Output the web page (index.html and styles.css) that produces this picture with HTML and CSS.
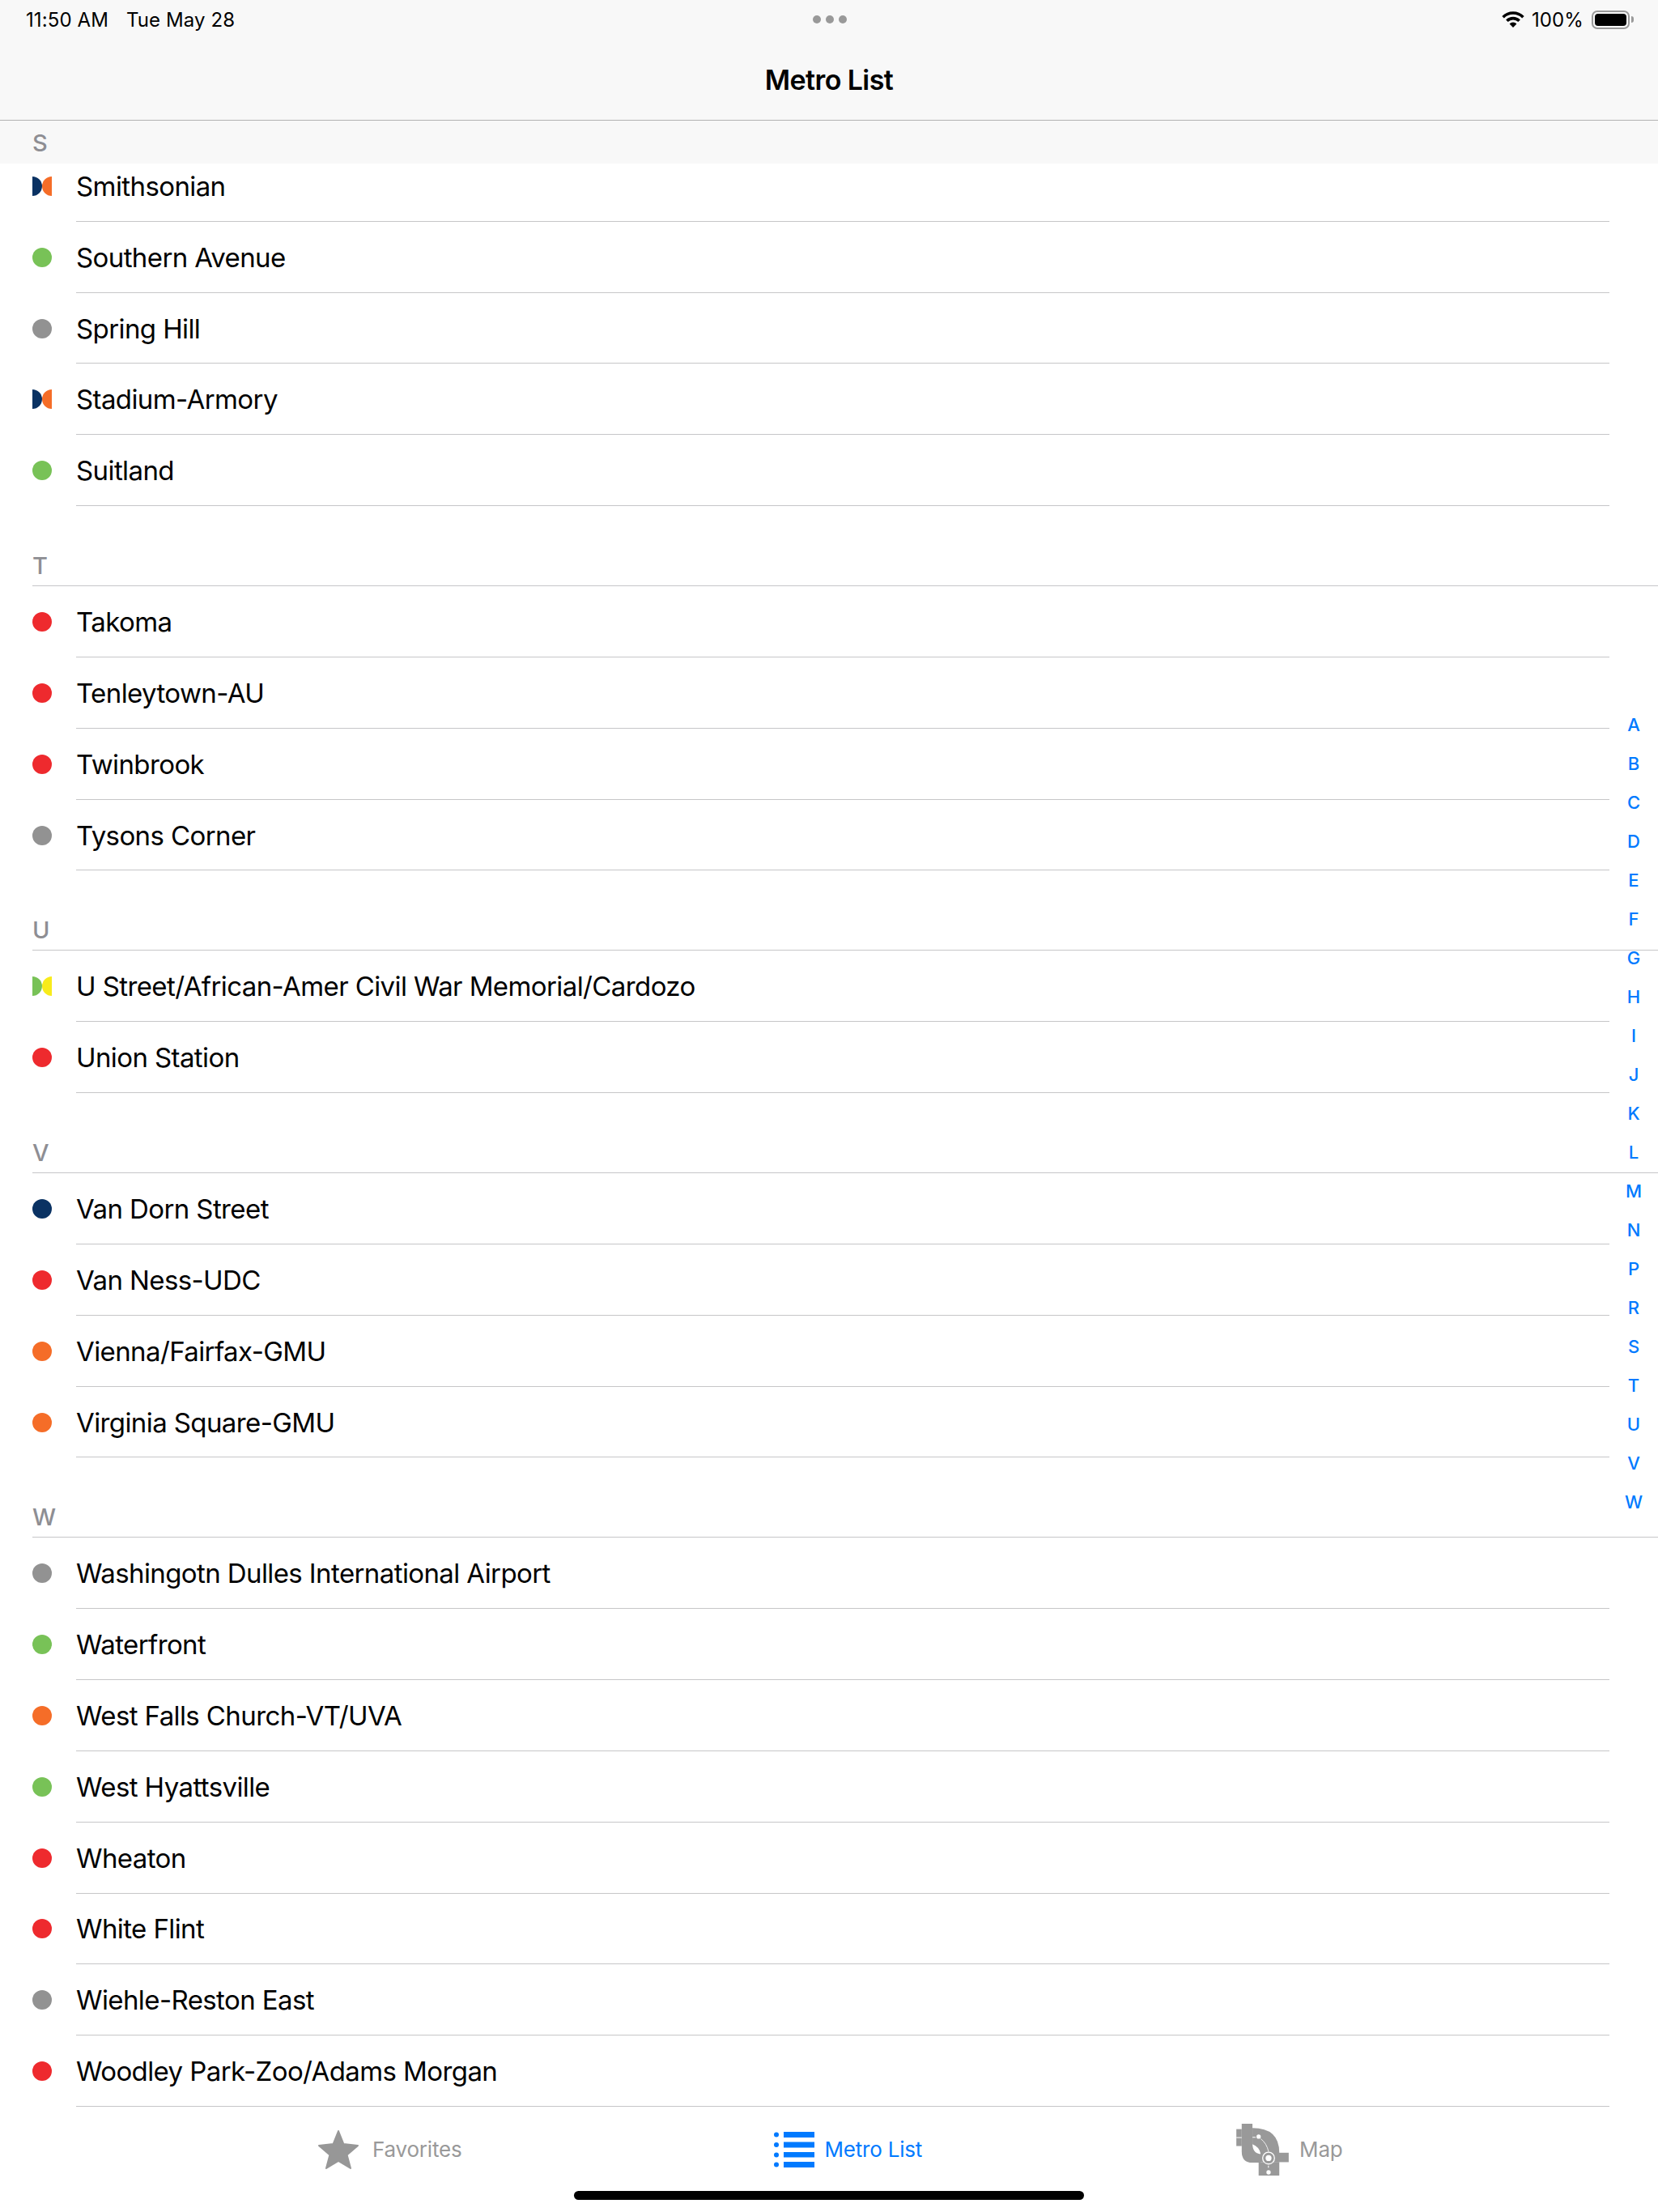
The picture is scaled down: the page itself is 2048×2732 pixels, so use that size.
FILE: index.html
```html
<!DOCTYPE html>
<html lang="en">
<head>
<meta charset="utf-8">
<title>Metro List</title>
<link rel="stylesheet" href="styles.css">
</head>
<body>
<div class="app">
  <header class="nav">
    <div class="status">
      <div class="status-left"><span class="time">11:50 AM</span><span>Tue May 28</span></div>
      <div class="multitask"><i></i><i></i><i></i></div>
      <div class="status-right">
        <svg class="wifi" viewBox="0 0 28 20"><path d="M1.6 7.2a17.5 17.5 0 0 1 24.8 0" /><path d="M6.4 11.8a10.7 10.7 0 0 1 15.2 0" /><path class="wedge" d="M14 20l-4.4-4.6a6.2 6.2 0 0 1 8.8 0z"/></svg>
        <span class="pct">100%</span>
        <div class="battery"><div class="battery-fill"></div></div>
        <div class="battery-nub"></div>
      </div>
    </div>
    <h1 class="title">Metro List</h1>
  </header>

  <main class="list">
    <div class="sticky-head">S</div>
    <div class="row row-cut"><svg class="split" viewBox="0 0 24 24"><path class="navy" d="M0 0a12 12 0 0 1 0 24z"/><path class="orange" d="M24 0a12 12 0 0 0 0 24z"/></svg><div class="name">Smithsonian</div></div>
    <div class="row"><span class="dot green"></span><div class="name">Southern Avenue</div></div>
    <div class="row"><span class="dot grey"></span><div class="name">Spring Hill</div></div>
    <div class="row"><svg class="split" viewBox="0 0 24 24"><path class="navy" d="M0 0a12 12 0 0 1 0 24z"/><path class="orange" d="M24 0a12 12 0 0 0 0 24z"/></svg><div class="name">Stadium-Armory</div></div>
    <div class="row"><span class="dot green"></span><div class="name">Suitland</div></div>

    <div class="section-head">T</div>
    <div class="row"><span class="dot red"></span><div class="name">Takoma</div></div>
    <div class="row"><span class="dot red"></span><div class="name">Tenleytown-AU</div></div>
    <div class="row"><span class="dot red"></span><div class="name">Twinbrook</div></div>
    <div class="row"><span class="dot grey"></span><div class="name">Tysons Corner</div></div>

    <div class="section-head">U</div>
    <div class="row"><svg class="split" viewBox="0 0 24 24"><path class="green-f" d="M0 0a12 12 0 0 1 0 24z"/><path class="yellow" d="M24 0a12 12 0 0 0 0 24z"/></svg><div class="name">U Street/African-Amer Civil War Memorial/Cardozo</div></div>
    <div class="row"><span class="dot red"></span><div class="name">Union Station</div></div>

    <div class="section-head">V</div>
    <div class="row"><span class="dot navy-d"></span><div class="name">Van Dorn Street</div></div>
    <div class="row"><span class="dot red"></span><div class="name">Van Ness-UDC</div></div>
    <div class="row"><span class="dot orange-d"></span><div class="name">Vienna/Fairfax-GMU</div></div>
    <div class="row"><span class="dot orange-d"></span><div class="name">Virginia Square-GMU</div></div>

    <div class="section-head">W</div>
    <div class="row"><span class="dot grey"></span><div class="name">Washingotn Dulles International Airport</div></div>
    <div class="row"><span class="dot green"></span><div class="name">Waterfront</div></div>
    <div class="row"><span class="dot orange-d"></span><div class="name">West Falls Church-VT/UVA</div></div>
    <div class="row"><span class="dot green"></span><div class="name">West Hyattsville</div></div>
    <div class="row"><span class="dot red"></span><div class="name">Wheaton</div></div>
    <div class="row"><span class="dot red"></span><div class="name">White Flint</div></div>
    <div class="row"><span class="dot grey"></span><div class="name">Wiehle-Reston East</div></div>
    <div class="row"><span class="dot red"></span><div class="name">Woodley Park-Zoo/Adams Morgan</div></div>

    <nav class="index">
      <span>A</span><span>B</span><span>C</span><span>D</span><span>E</span><span>F</span><span>G</span><span>H</span><span>I</span><span>J</span><span>K</span><span>L</span><span>M</span><span>N</span><span>P</span><span>R</span><span>S</span><span>T</span><span>U</span><span>V</span><span>W</span>
    </nav>
  </main>

  <footer class="tabbar">
    <div class="tabs">
      <div class="tab tab-fav">
        <svg class="ic-star" viewBox="0 0 52 50"><path d="M26 2 L32.4 18 L50 20 L36.6 31.4 L41 48 L26 39 L11 48 L15.4 31.4 L2 20 L19.6 18 Z"/></svg>
        <span>Favorites</span>
      </div>
      <div class="tab tab-list active">
        <svg class="ic-list" viewBox="0 0 50 44"><circle cx="3" cy="3.5" r="3"/><circle cx="3" cy="16" r="3"/><circle cx="3" cy="28.5" r="3"/><circle cx="3" cy="40.5" r="3"/><rect x="12" y="0" width="38" height="7"/><rect x="12" y="12.5" width="38" height="7"/><rect x="12" y="25" width="38" height="6.5"/><rect x="12" y="37" width="38" height="7"/></svg>
        <span>Metro List</span>
      </div>
      <div class="tab tab-map">
        <svg class="ic-map" viewBox="85 62 195 193">
          <rect x="85" y="82" width="20" height="63"/>
          <path d="M105 62H145V135Q145 172 175 175V207H145Q105 207 105 165Z"/>
          <path d="M145 78Q245 78 245 170V205H175V172Q170 148 145 138Z"/>
          <rect x="225" y="170" width="55" height="35"/>
          <rect x="168" y="205" width="77" height="50"/>
          <rect class="cut" x="85" y="112" width="20" height="3"/>
          <rect class="cut" x="145" y="111" width="12" height="3"/>
          <circle class="cut" cx="168" cy="110" r="8"/>
          <path class="cut-line" d="M176 118Q198 135 205 166"/>
          <circle class="cut" cx="205" cy="190" r="24"/>
          <circle cx="205" cy="190" r="20"/>
          <circle class="cut" cx="205" cy="190" r="11"/>
          <rect class="cut" x="203" y="218" width="3" height="8"/>
          <circle class="cut" cx="205" cy="243" r="8"/>
        </svg>
        <span>Map</span>
      </div>
    </div>
    <div class="home"></div>
  </footer>
</div>
</body>
</html>
```
FILE: styles.css
```css
* { box-sizing: border-box; }
html, body { margin: 0; padding: 0; background: #fff; }
body { font-family: Inter, "Liberation Sans", sans-serif; color: #000; }
.app { width: 2048px; height: 2732px; display: flex; flex-direction: column; overflow: hidden; }

.nav { height: 149px; background: #f8f8f8; border-bottom: 1px solid #b2b2b2; flex: none; }
.status { height: 48px; display: flex; align-items: center; padding: 0 30px 0 32px; font-size: 24px; letter-spacing: 0.1px; }
.status-left { flex: 1; display: flex; gap: 22px; }
.multitask { display: flex; gap: 6px; }
.multitask i { display: block; width: 10px; height: 10px; border-radius: 50%; background: #999; }
.status-right { flex: 1; display: flex; justify-content: flex-end; align-items: center; }
.wifi { width: 28px; height: 20px; margin-right: 9px; }
.wifi path { fill: none; stroke: #000; stroke-width: 3.6; }
.wifi .wedge { fill: #000; stroke: none; }
.battery { width: 47px; height: 23px; margin-left: 10px; border: 2px solid #999; border-radius: 7px; padding: 2px; }
.battery-fill { width: 100%; height: 100%; background: #000; border-radius: 4px; }
.battery-nub { width: 3px; height: 8px; margin-left: 2px; background: #999; border-radius: 0 3px 3px 0; }
.title { height: 100px; margin: 0; display: flex; align-items: center; justify-content: center; font-size: 34px; font-weight: 600; letter-spacing: -0.6px; }

.list { position: relative; flex: 1; min-height: 0; }
.sticky-head { position: relative; z-index: 1; height: 53px; background: #f8f8f8; padding: 1px 0 0 40px; display: flex; align-items: center; font-size: 29px; font-weight: 500; color: #8e8e93; }
.section-head { height: 99px; margin-left: 40px; border-bottom: 1px solid #c6c6c8; display: flex; align-items: flex-end; padding-bottom: 7px; font-size: 29px; line-height: 34px; font-weight: 500; color: #8e8e93; }
.row { display: flex; align-items: center; height: 87.83px; padding-left: 40px; padding-right: 60px; }
.row-cut { margin-top: -16px; }
.name { flex: 1; height: 100%; margin-left: 30px; padding-top: 1px; display: flex; align-items: center; font-size: 33px; letter-spacing: -0.6px; border-bottom: 1px solid #c6c6c8; }
.dot { width: 24px; height: 24px; border-radius: 50%; flex: none; }
.split { width: 24px; height: 24px; flex: none; }
.red { background: #ee2a2e; }
.green { background: #78c257; }
.grey { background: #929292; }
.navy-d { background: #0a3263; }
.orange-d { background: #f56d28; }
.split .navy { fill: #0a3263; }
.split .orange { fill: #f56d28; }
.split .green-f { fill: #78c257; }
.split .yellow { fill: #f8eb1b; }

.index { position: absolute; right: 0; top: 722px; width: 60px; display: flex; flex-direction: column; align-items: center; color: #007aff; font-size: 22px; font-weight: 500; }
.index span { height: 48px; line-height: 48px; }

.tabbar { flex: none; height: 129px; display: flex; flex-direction: column; }
.tabs { height: 103px; display: flex; align-items: center; padding-left: 392px; }
.tab { display: flex; align-items: center; font-size: 26px; letter-spacing: -0.2px; color: #999; }
.tab.active { color: #007aff; }
.tab-list { margin-left: 386px; }
.tab-map { margin-left: 388px; }
.ic-star { width: 52px; height: 50px; margin-right: 16px; }
.ic-star path { fill: #979797; stroke: #979797; stroke-width: 2; stroke-linejoin: round; }
.ic-list { width: 50px; height: 44px; margin-right: 12px; fill: #007aff; }
.ic-map { width: 65px; height: 64px; margin-right: 13px; fill: #999; }
.ic-map .cut { fill: #fff; }
.ic-map .cut-line { fill: none; stroke: #fff; stroke-width: 2.5; }
.home { width: 630px; height: 11px; margin: 0 0 0 709px; border-radius: 6px; background: #000; }
```
